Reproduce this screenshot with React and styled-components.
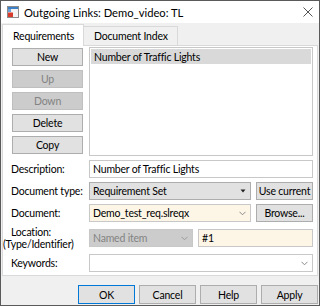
import React from "react";
import styled, { createGlobalStyle } from "styled-components";

const Global = createGlobalStyle`
  html, body { margin: 0; padding: 0; background: #ffffff; }
  * { box-sizing: border-box; }
`;

const FONT = `Lato, "Liberation Sans", sans-serif`;

const Window = styled.div`
  width: 320px;
  height: 306px;
  border: 1px solid #5a5a5a;
  display: flex;
  flex-direction: column;
  font-family: ${FONT};
  font-size: 10.5px;
  letter-spacing: -0.2px;
  color: #000;
  background: #f0f0f0;
`;

const TitleBar = styled.div`
  height: 22px;
  background: #ffffff;
  display: flex;
  align-items: center;
  padding: 0 6px;
  flex-shrink: 0;
`;

const TitleText = styled.span`
  margin-left: 5px;
  font-size: 11.2px;
  letter-spacing: 0;
  color: #000;
  flex: 1;
  white-space: nowrap;
`;

const Body = styled.div`
  flex: 1;
  display: flex;
  flex-direction: column;
  padding: 1px 1px 0 1px;
`;

const TabRow = styled.div`
  display: flex;
  align-items: flex-end;
  height: 21px;
`;

const Tab = styled.div`
  height: ${(p) => (p.$active ? 22 : 19)}px;
  padding: 0 9px 0 10px;
  display: flex;
  align-items: center;
  background: ${(p) => (p.$active ? "#ffffff" : "#f0f0f0")};
  border: 1px solid #d9d9d9;
  border-bottom: none;
  margin-bottom: ${(p) => (p.$active ? -1 : 0)}px;
  margin-left: ${(p) => (p.$active ? 0 : -1)}px;
  position: relative;
  z-index: ${(p) => (p.$active ? 2 : 1)};
  white-space: nowrap;
`;

const Panel = styled.div`
  border: 1px solid #d9d9d9;
  background: #ffffff;
  height: 231px;
  padding: 1px 4px 0 8px;
  display: flex;
  flex-direction: column;
  flex-shrink: 0;
`;

const Upper = styled.div`
  display: grid;
  grid-template-columns: 72px 1fr;
  column-gap: 6px;
  height: 110px;
  flex-shrink: 0;
`;

const ButtonColumn = styled.div`
  display: flex;
  flex-direction: column;
  gap: 4px;
  padding: 1px 0 0 1px;
`;

const Button = styled.button`
  font-family: ${FONT};
  font-size: 10.5px;
  letter-spacing: -0.2px;
  height: ${(p) => p.$h || 18}px;
  width: ${(p) => p.$w || "auto"};
  padding: 0;
  margin: 0;
  background: ${(p) => (p.disabled ? "#cccccc" : "#e1e1e1")};
  color: ${(p) => (p.disabled ? "#838383" : "#000000")};
  border: 1px solid ${(p) => (p.$default ? "#0078d7" : p.disabled ? "#bfbfbf" : "#adadad")};
  border-radius: 0;
  display: flex;
  align-items: center;
  justify-content: center;
  flex-shrink: 0;
  white-space: nowrap;
`;

const List = styled.div`
  border: 1px solid #c8c8c8;
  background: #ffffff;
  height: 109px;
  padding: 1px;
`;

const ListItem = styled.div`
  background: #d9d9d9;
  height: 15px;
  padding-left: 3px;
  display: flex;
  align-items: center;
`;

const Form = styled.div`
  display: flex;
  flex-direction: column;
  gap: 4px;
  margin-top: 3px;
`;

const Row = styled.div`
  display: grid;
  grid-template-columns: 78px 1fr;
  align-items: center;
  height: ${(p) => p.$h || 18}px;
`;

const Label = styled.div`
  line-height: 12px;
  white-space: nowrap;
`;

const LabelLine = styled.div`
  margin-left: ${(p) => p.$shift || 0}px;
`;

const Controls = styled.div`
  display: flex;
  align-items: center;
  gap: 5px;
`;

const Field = styled.div`
  height: 18px;
  flex: ${(p) => (p.$w ? "none" : "1")};
  width: ${(p) => (p.$w ? p.$w + "px" : "auto")};
  border: 1px solid ${(p) => (p.$combo ? "#adadad" : "#c8c8c8")};
  background: ${(p) =>
    p.$disabled ? "#cccccc" : p.$cream ? "#fdf6e6" : p.$combo ? "#e1e1e1" : "#ffffff"};
  color: ${(p) => (p.$disabled ? "#838383" : "#000")};
  display: flex;
  align-items: center;
  padding: 0 4px 0 3px;
  white-space: nowrap;
  overflow: hidden;
`;

const FieldText = styled.span`
  flex: 1;
`;

const Footer = styled.div`
  display: flex;
  justify-content: flex-end;
  gap: 4px;
  padding: 9px 0 0 0;
`;

const Chevron = ({ color = "#8a8a8a" }) => (
  <svg width="7" height="5" viewBox="0 0 7 5">
    <path d="M0.5 0.8 L3.5 3.8 L6.5 0.8" stroke={color} strokeWidth="1" fill="none" />
  </svg>
);

const Triangle = () => (
  <svg width="6" height="4" viewBox="0 0 6 4">
    <path d="M0.5 0.5 L5.5 0.5 L3 3.5 Z" fill="#222" />
  </svg>
);

const AppIcon = () => (
  <svg width="12" height="12" viewBox="0 0 12 12">
    <rect x="0.5" y="0.5" width="11" height="11" fill="#f4f4f4" stroke="#8c8c8c" />
    <rect x="1" y="1" width="10" height="2" fill="#3c7fc4" />
    <rect x="1" y="3" width="3" height="3" fill="#6aa0d6" />
    <rect x="1" y="6.5" width="5" height="4.5" fill="#d83b2b" />
  </svg>
);

const CloseIcon = () => (
  <svg width="10" height="10" viewBox="0 0 10 10">
    <path d="M0.5 0.5 L9.5 9.5 M9.5 0.5 L0.5 9.5" stroke="#555" strokeWidth="1" />
  </svg>
);

export default function App() {
  return (
    <>
      <Global />
      <Window>
        <TitleBar>
          <AppIcon />
          <TitleText>Outgoing Links: Demo_video: TL</TitleText>
          <CloseIcon />
        </TitleBar>
        <Body>
          <TabRow>
            <Tab $active>Requirements</Tab>
            <Tab>Document Index</Tab>
          </TabRow>
          <Panel>
            <Upper>
              <ButtonColumn>
                <Button>New</Button>
                <Button disabled>Up</Button>
                <Button disabled>Down</Button>
                <Button>Delete</Button>
                <Button>Copy</Button>
              </ButtonColumn>
              <List>
                <ListItem>Number of Traffic Lights</ListItem>
              </List>
            </Upper>
            <Form>
              <Row>
                <Label>Description:</Label>
                <Controls>
                  <Field>
                    <FieldText>Number of Traffic Lights</FieldText>
                  </Field>
                </Controls>
              </Row>
              <Row>
                <Label>Document type:</Label>
                <Controls>
                  <Field $combo>
                    <FieldText>Requirement Set</FieldText>
                    <Triangle />
                  </Field>
                  <Button $w="57px">Use current</Button>
                </Controls>
              </Row>
              <Row>
                <Label>Document:</Label>
                <Controls>
                  <Field $cream>
                    <FieldText>Demo_test_req.slreqx</FieldText>
                    <Chevron />
                  </Field>
                  <Button $w="57px">Browse...</Button>
                </Controls>
              </Row>
              <Row $h={24}>
                <Label>
                  <LabelLine>Location:</LabelLine>
                  <LabelLine $shift={-8}>(Type/Identifier)</LabelLine>
                </Label>
                <Controls>
                  <Field $disabled $w={104}>
                    <FieldText>Named item</FieldText>
                    <Chevron color="#9a9a9a" />
                  </Field>
                  <Field $cream>
                    <FieldText>#1</FieldText>
                  </Field>
                </Controls>
              </Row>
              <Row>
                <Label>Keywords:</Label>
                <Controls>
                  <Field>
                    <FieldText></FieldText>
                    <Chevron />
                  </Field>
                </Controls>
              </Row>
            </Form>
          </Panel>
          <Footer>
            <Button $w="57px" $h={19} $default>OK</Button>
            <Button $w="57px" $h={19}>Cancel</Button>
            <Button $w="57px" $h={19}>Help</Button>
            <Button $w="57px" $h={19}>Apply</Button>
          </Footer>
        </Body>
      </Window>
    </>
  );
}
